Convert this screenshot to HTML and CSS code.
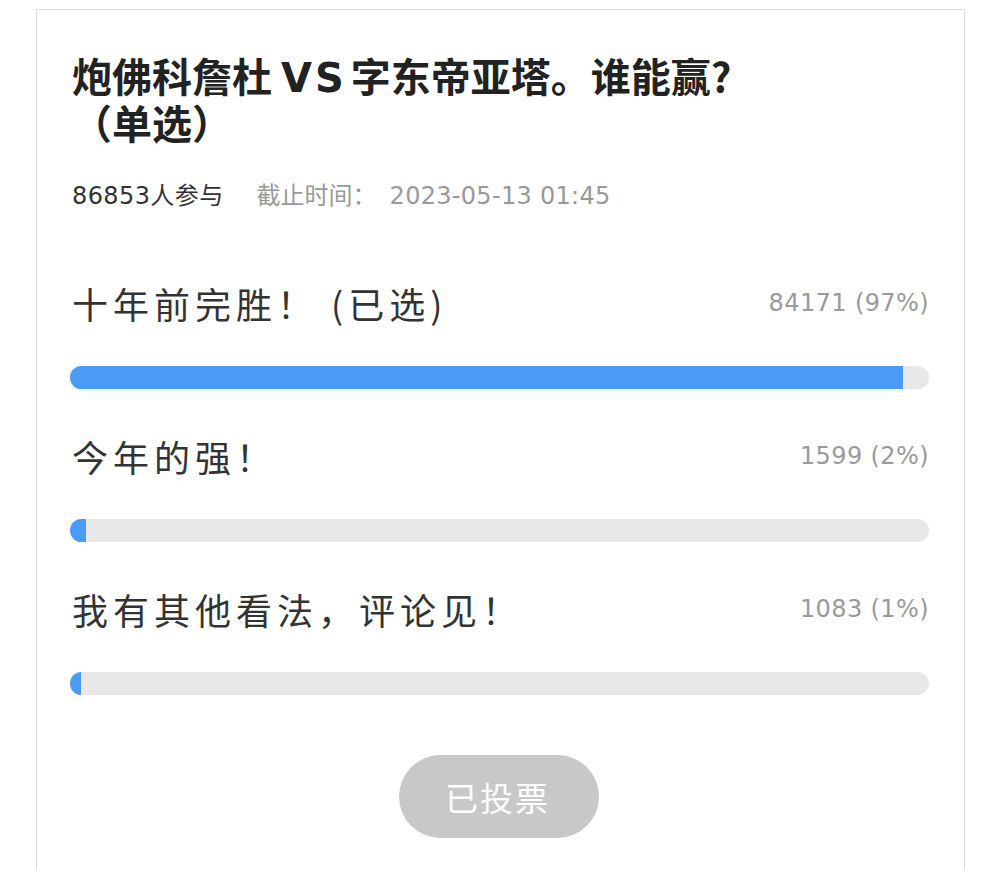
FILE: index.html
```html
<!DOCTYPE html>
<html lang="zh-CN">
<head>
<meta charset="utf-8">
<link rel="stylesheet" href="styles.css">
</head>
<body>
<div class="card">
  <h1 class="title">炮佛科詹杜<span class="latin">VS</span>字东帝亚塔。谁能赢?<br>（单选）</h1>
  <div class="meta"><span class="count">86853人参与</span><span class="deadline">截止时间：<span class="date">2023-05-13 01:45</span></span></div>
  <div class="options">
    <div class="option">
      <div class="row"><span class="label">十年前完胜！ (已选)</span><span class="votes">84171 (97%)</span></div>
      <div class="track"><div class="fill" style="width:97%"></div></div>
    </div>
    <div class="option">
      <div class="row"><span class="label">今年的强！</span><span class="votes">1599 (2%)</span></div>
      <div class="track"><div class="fill" style="width:1.9%"></div></div>
    </div>
    <div class="option">
      <div class="row"><span class="label">我有其他看法，评论见！</span><span class="votes">1083 (1%)</span></div>
      <div class="track"><div class="fill" style="width:1.3%"></div></div>
    </div>
  </div>
  <div class="actions"><button class="voted" type="button">已投票</button></div>
</div>
</body>
</html>
```

FILE: styles.css
```css
html, body {
  margin: 0;
  padding: 0;
  background: #ffffff;
}
body {
  font-family: "Noto Sans CJK SC", "Noto Sans", sans-serif;
  color: #333333;
  padding: 9px 0 0 36px;
  height: 869px;
  box-sizing: border-box;
  overflow: hidden;
}
.card {
  width: 929px;
  box-sizing: border-box;
  border: 1px solid #dedede;
  border-bottom: none;
  padding: 42px 35px 40px 33px;
  min-height: 900px;
}
.title {
  margin: 0;
  padding-left: 2px;
  font-size: 40px;
  line-height: 47px;
  font-weight: 700;
  color: #222222;
}
.title .latin {
  font-family: "DejaVu Sans", sans-serif;
  font-weight: 700;
  line-height: 1;
  letter-spacing: 3px;
  padding: 0 4px 0 9px;
}
.meta {
  margin-top: 35px;
  padding-left: 2px;
  font-family: "DejaVu Sans", "Noto Sans CJK SC", sans-serif;
  font-size: 24px;
  line-height: 30px;
  height: 30px;
  display: flex;
  align-items: center;
  gap: 33px;
}
.meta .count { color: #333333; letter-spacing: 0.4px; }
.meta .deadline { color: #999999; }
.meta .date { margin-left: 13px; letter-spacing: 0.3px; }
.options {
  margin-top: 70px;
  display: flex;
  flex-direction: column;
  gap: 45px;
}
.row {
  display: flex;
  justify-content: space-between;
  align-items: center;
  height: 44px;
  padding-left: 2px;
}
.label {
  font-size: 36px;
  line-height: 44px;
  letter-spacing: 5px;
  color: #333333;
}
.votes {
  font-family: "DejaVu Sans", "Noto Sans CJK SC", sans-serif;
  font-size: 24px;
  line-height: 30px;
  letter-spacing: 0.4px;
  color: #9a9a9a;
}
.track {
  margin-top: 41px;
  height: 23px;
  border-radius: 12px;
  background: #e8e8e8;
  overflow: hidden;
}
.fill {
  height: 100%;
  background: #4a9bf7;
}
.actions {
  margin-top: 60px;
  display: flex;
  justify-content: center;
}
.voted {
  width: 200px;
  height: 83px;
  border: none;
  border-radius: 42px;
  background: #c8c8c8;
  color: #ffffff;
  font-family: "Noto Sans CJK SC", sans-serif;
  font-size: 33px;
  letter-spacing: 2px;
  padding-left: 4px;
  margin-right: 2px;
}
```
